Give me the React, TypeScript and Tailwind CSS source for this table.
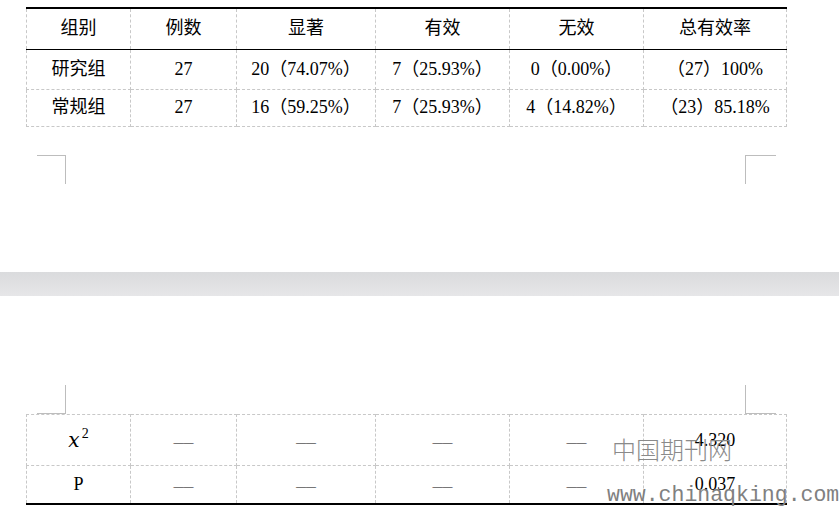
const head = ["组别", "例数", "显著", "有效", "无效", "总有效率"];

const rows = [
  ["研究组", "27", "20（74.07%）", "7（25.93%）", "0（0.00%）", "（27）100%"],
  ["常规组", "27", "16（59.25%）", "7（25.93%）", "4（14.82%）", "（23）85.18%"],
];

const cell = "border border-dashed border-[#c8c8c8] text-center align-middle p-0";
const thickTop = "border-t-2 border-t-black [border-top-style:solid]";
const thinBottom = "border-b-black [border-bottom-style:solid]";
const thickBottom = "border-b-2 border-b-black [border-bottom-style:solid]";

const Cols = () => (
  <colgroup>
    <col className="w-[104px]" />
    <col className="w-[106px]" />
    <col className="w-[139px]" />
    <col className="w-[134px]" />
    <col className="w-[134px]" />
    <col className="w-[143px]" />
  </colgroup>
);

const Marks = () => (
  <div className="flex justify-between pl-[37px] pr-[63px]">
    <div className="w-[29px] h-[29px] border-t border-r border-[#bdbdbd]" />
    <div className="w-[31px] h-[29px] border-t border-l border-[#bdbdbd]" />
  </div>
);

const MarksBottom = () => (
  <div className="flex justify-between pl-[37px] pr-[63px]">
    <div className="w-[29px] h-[29px] border-b border-r border-[#bdbdbd]" />
    <div className="w-[31px] h-[29px] border-b border-l border-[#bdbdbd]" />
  </div>
);

const Dash = () => <span className="text-[10px]">——</span>;

export default function App() {
  return (
    <div className="relative w-[839px] h-[510px] overflow-hidden bg-white text-black font-['Liberation_Serif','Noto_Sans_CJK_SC',serif] text-[18px]">
      {/* page 1 */}
      <div className="h-[272px] pt-[7px]">
        <table className="ml-[26px] w-[761px] table-fixed border-collapse">
          <Cols />
          <tbody>
            <tr>
              {head.map((h) => (
                <td key={h} className={`${cell} h-[41px] ${thickTop} ${thinBottom}`}>
                  {h}
                </td>
              ))}
            </tr>
            {rows.map((r, i) => (
              <tr key={i}>
                {r.map((c, j) => (
                  <td key={j} className={`${cell} ${i === 0 ? "h-[40px]" : "h-[37px]"}`}>
                    {c}
                  </td>
                ))}
              </tr>
            ))}
          </tbody>
        </table>
        <div className="mt-[28px]">
          <Marks />
        </div>
      </div>

      {/* page gap */}
      <div className="h-[24px] bg-gradient-to-b from-[#dadbdd] to-[#e6e6e8]" />

      {/* page 2 */}
      <div className="pt-[89px]">
        <MarksBottom />
        <table className="ml-[26px] w-[761px] table-fixed border-collapse">
          <Cols />
          <tbody>
            <tr>
              <td className={`${cell} h-[51px]`}>
                <span className="italic font-['DejaVu_Serif',serif] text-[20px]">x</span>
                <span className="text-[14px] ml-[2px] relative -top-[9px]">2</span>
              </td>
              {[0, 1, 2, 3].map((k) => (
                <td key={k} className={`${cell} h-[51px]`}>
                  <Dash />
                </td>
              ))}
              <td className={`${cell} h-[51px]`}>4.320</td>
            </tr>
            <tr>
              <td className={`${cell} h-[38px] ${thickBottom}`}>P</td>
              {[0, 1, 2, 3].map((k) => (
                <td key={k} className={`${cell} h-[38px] ${thickBottom}`}>
                  <Dash />
                </td>
              ))}
              <td className={`${cell} h-[38px] ${thickBottom}`}>0.037</td>
            </tr>
          </tbody>
        </table>
      </div>

      {/* watermark */}
      <div className="absolute left-[612px] top-[437px] text-[24px] leading-none text-[#8a8a8a] font-['Noto_Sans_CJK_SC',sans-serif] font-light">
        中国期刊网
      </div>
      <div className="absolute left-[607px] top-[485px] text-[21.5px] leading-none text-[#808080] font-['Liberation_Mono',monospace] whitespace-nowrap">
        www.chinaqking.com
      </div>
    </div>
  );
}
